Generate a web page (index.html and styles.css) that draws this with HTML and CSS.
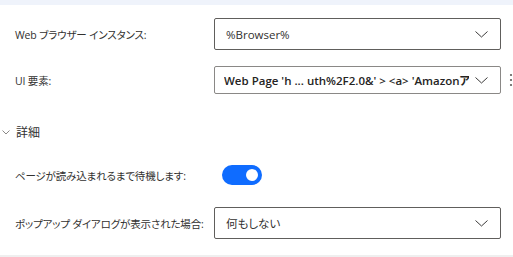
FILE: index.html
```html
<!DOCTYPE html>
<html lang="ja">
<head>
<meta charset="utf-8">
<link rel="stylesheet" href="styles.css">
</head>
<body>
<div class="strip"></div>
<div class="form">
  <div class="row row-browser">
    <div class="label">Web ブラウザー インスタンス:</div>
    <div class="field field-dark">
      <span class="value">%Browser%</span>
      <svg class="chev" width="13" height="7" viewBox="0 0 13 7"><path d="M0.5 0.5 L6.5 6 L12.5 0.5" fill="none" stroke="#3b3a39" stroke-width="1"/></svg>
    </div>
  </div>
  <div class="row row-ui">
    <div class="label">UI 要素:</div>
    <div class="field field-light field-short">
      <span class="value value-strong">Web Page 'h ... uth%2F2.0&amp;' &gt; &lt;a&gt; 'Amazonアカウント'</span>
      <svg class="chev" width="13" height="7" viewBox="0 0 13 7"><path d="M0.5 0.5 L6.5 6 L12.5 0.5" fill="none" stroke="#3b3a39" stroke-width="1"/></svg>
    </div>
    <svg class="more" width="4" height="14" viewBox="0 0 4 14"><circle cx="2" cy="2" r="1.1" fill="#605e5c"/><circle cx="2" cy="7" r="1.1" fill="#605e5c"/><circle cx="2" cy="12" r="1.1" fill="#605e5c"/></svg>
  </div>
  <div class="section">
    <svg class="sec-chev" width="8" height="5" viewBox="0 0 8 5"><path d="M0.5 0.5 L4 4 L7.5 0.5" fill="none" stroke="#8a8886" stroke-width="1"/></svg>
    <span class="sec-title">詳細</span>
  </div>
  <div class="row row-toggle">
    <div class="label label-toggle">ページが読み込まれるまで待機します:</div>
    <div class="toggle"><span class="knob"></span></div>
  </div>
  <div class="row row-popup">
    <div class="label">ポップアップ ダイアログが表示された場合:</div>
    <div class="field field-dark">
      <span class="value">何もしない</span>
      <svg class="chev" width="13" height="7" viewBox="0 0 13 7"><path d="M0.5 0.5 L6.5 6 L12.5 0.5" fill="none" stroke="#3b3a39" stroke-width="1"/></svg>
    </div>
  </div>
</div>
<div class="footer-line"></div>
</body>
</html>
```
FILE: styles.css
```css
html, body {
  margin: 0;
  padding: 0;
  background: #ffffff;
  overflow: hidden;
}
body {
  width: 513px;
  height: 257px;
  font-family: "Open Sans", "Noto Sans CJK JP", sans-serif;
  font-feature-settings: "palt";
  font-size: 11px;
  color: #323130;
}
.strip {
  height: 5px;
  background: #eff3fb;
}
.form {
  padding-left: 15px;
}
.row {
  display: flex;
  align-items: center;
}
.label {
  width: 199px;
  flex: none;
  white-space: nowrap;
  font-size: 10.5px;
  letter-spacing: -0.15px;
}
.label-toggle {
  width: 207px;
}
.row-browser {
  margin-top: 13px;
}
.row-ui {
  margin-top: 16px;
}
.row-toggle {
  margin-top: 23px;
}
.row-popup {
  margin-top: 22px;
}
.field {
  box-sizing: border-box;
  width: 287px;
  height: 32px;
  border: 1px solid #605e5c;
  border-radius: 2px;
  display: flex;
  align-items: center;
  padding: 0 12px 0 11px;
  gap: 8px;
  background: #fff;
}
.field-light {
  border-color: #8a8886;
}
.field-short {
  height: 28px;
  padding-left: 9px;
  gap: 6px;
}
.value {
  flex: 1;
  overflow: hidden;
  white-space: nowrap;
  font-size: 11.5px;
}
.value-strong {
  font-weight: 600;
  color: #252423;
}
.chev {
  flex: none;
}
.more {
  margin-left: 8px;
  flex: none;
}
.section {
  display: flex;
  align-items: center;
  height: 20px;
  margin-top: 28px;
  margin-left: -13px;
}
.sec-chev {
  margin-right: 6px;
}
.sec-title {
  font-size: 12px;
}
.toggle {
  width: 40px;
  height: 20px;
  border-radius: 10px;
  background: #0f6cff;
  display: flex;
  align-items: center;
  justify-content: flex-end;
  padding-right: 4px;
  box-sizing: border-box;
}
.knob {
  width: 12px;
  height: 12px;
  border-radius: 50%;
  background: #fff;
}
.footer-line {
  margin-top: 16px;
  height: 2px;
  background: #efefef;
}
```
